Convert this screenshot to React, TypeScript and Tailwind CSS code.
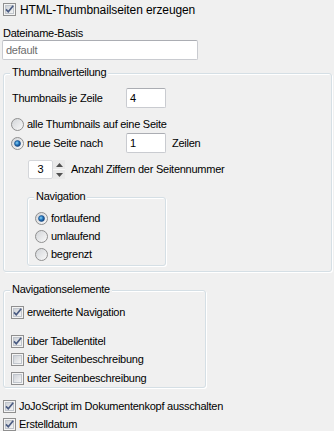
import type { ReactNode } from 'react'

const font = { fontFamily: '"Liberation Sans", Arial, sans-serif' }

function CheckBox({ checked = false }: { checked?: boolean }) {
  return (
    <svg width="13" height="13" viewBox="0 0 13 13" className="shrink-0">
      <defs>
        <linearGradient id="cbg" x1="0" y1="0" x2="1" y2="1">
          <stop offset="0" stopColor="#cbcfd5" />
          <stop offset="1" stopColor="#f7f7f7" />
        </linearGradient>
      </defs>
      <rect x="0.5" y="0.5" width="12" height="12" fill="#f4f4f4" stroke="#8f8f8f" />
      <rect x="2.5" y="2.5" width="8" height="8" fill="url(#cbg)" stroke="#c0c5cc" />
      {checked && (
        <path d="M3 6.3 L5.3 8.8 L10.2 2.8" fill="none" stroke="#4a5b82" strokeWidth="1.7" />
      )}
    </svg>
  )
}

function Radio({ checked = false }: { checked?: boolean }) {
  return (
    <svg width="13" height="13" viewBox="0 0 13 13" className="shrink-0">
      <defs>
        <linearGradient id="rbg" x1="0" y1="0" x2="1" y2="1">
          <stop offset="0" stopColor="#d0d3d7" />
          <stop offset="1" stopColor="#fbfbfb" />
        </linearGradient>
        <radialGradient id="rdot" cx="0.4" cy="0.4" r="0.6">
          <stop offset="0" stopColor="#8fd3f5" />
          <stop offset="0.5" stopColor="#2a7fc4" />
          <stop offset="1" stopColor="#0f3f7d" />
        </radialGradient>
      </defs>
      <circle cx="6.5" cy="6.5" r="6" fill="url(#rbg)" stroke="#8f8f8f" />
      {checked && <circle cx="6.5" cy="6.5" r="3" fill="url(#rdot)" stroke="#1b4f8a" strokeWidth="0.6" />}
    </svg>
  )
}

function Group({ title, className, children }: { title: string; className: string; children: ReactNode }) {
  return (
    <div
      className={`relative rounded-[3px] border border-[#d5dfe5] shadow-[inset_1px_1px_0_#ffffff,1px_1px_0_#ffffff] ${className}`}
    >
      <span className="absolute -top-[8px] left-[6px] bg-[#f0f0f0] px-[2px] text-[11px] leading-[13px]">
        {title}
      </span>
      {children}
    </div>
  )
}

function TextBox({ value, className }: { value: string; className: string }) {
  return (
    <div
      className={`flex items-center rounded-[2px] border border-[#c9cbd0] border-t-[#abadb3] bg-white pl-[3px] text-[11px] ${className}`}
    >
      {value}
    </div>
  )
}

function CheckRow({ label, checked, className = '' }: { label: string; checked?: boolean; className?: string }) {
  return (
    <div className={`flex h-[13px] items-center gap-[3px] text-[11px] ${className}`}>
      <CheckBox checked={checked} />
      <span>{label}</span>
    </div>
  )
}

function RadioRow({ label, checked, className = '' }: { label: string; checked?: boolean; className?: string }) {
  return (
    <div className={`flex h-[13px] items-center gap-[3px] text-[11px] ${className}`}>
      <Radio checked={checked} />
      <span>{label}</span>
    </div>
  )
}

export default function App() {
  return (
    <div
      style={font}
      className="flex h-[431px] w-[334px] flex-col bg-[#f0f0f0] pt-[3px] tracking-[-0.25px] text-black"
    >
      <div className="flex h-[13px] items-center gap-[4px] pl-[3px] text-[12px] tracking-[-0.1px]">
        <CheckBox checked />
        <span>HTML-Thumbnailseiten erzeugen</span>
      </div>

      <div className="mt-[11px] h-[13px] pl-[3px] text-[11px] leading-[13px]">Dateiname-Basis</div>
      <TextBox value="default" className="ml-[2px] h-[20px] w-[196px] text-[#6d6d6d]" />

      <Group title="Thumbnailverteilung" className="ml-[3px] mt-[13px] h-[199px] w-[329px]">
        <div className="mt-[14px] flex h-[20px] items-center text-[11px]">
          <span className="w-[122px] pl-[8px]">Thumbnails je Zeile</span>
          <TextBox value="4" className="h-[20px] w-[40px]" />
        </div>

        <RadioRow label="alle Thumbnails auf eine Seite" className="ml-[7px] mt-[10px]" />

        <div className="mt-[2px] flex h-[20px] items-center text-[11px]">
          <div className="flex w-[122px] items-center gap-[3px] pl-[7px]">
            <Radio checked />
            <span>neue Seite nach</span>
          </div>
          <TextBox value="1" className="h-[20px] w-[40px]" />
          <span className="ml-[6px]">Zeilen</span>
        </div>

        <div className="ml-[24px] mt-[7px] flex h-[19px] items-center text-[11px]">
          <div className="flex h-[19px] w-[25px] items-center justify-center rounded-[2px] border border-[#d4d6da] bg-white">
            3
          </div>
          <div className="flex h-[19px] w-[12px] flex-col">
            <div className="flex flex-1 items-center justify-center border-b border-[#f7f7f7] bg-[#e9e9e9]">
              <svg width="7" height="4" viewBox="0 0 7 4">
                <path d="M0 4 L3.5 0 L7 4 Z" fill="#505050" />
              </svg>
            </div>
            <div className="flex flex-1 items-center justify-center bg-[#e9e9e9]">
              <svg width="7" height="4" viewBox="0 0 7 4">
                <path d="M0 0 L3.5 4 L7 0 Z" fill="#505050" />
              </svg>
            </div>
          </div>
          <span className="ml-[6px]">Anzahl Ziffern der Seitennummer</span>
        </div>

        <Group title="Navigation" className="ml-[23px] mt-[18px] h-[69px] w-[139px]">
          <div className="mt-[14px] flex flex-col gap-[5px] pl-[7px]">
            <RadioRow label="fortlaufend" checked />
            <RadioRow label="umlaufend" />
            <RadioRow label="begrenzt" />
          </div>
        </Group>
      </Group>

      <Group title="Navigationselemente" className="ml-[3px] mt-[18px] h-[98px] w-[203px]">
        <div className="flex flex-col pl-[7px]">
          <CheckRow label="erweiterte Navigation" checked className="mt-[15px]" />
          <CheckRow label="über Tabellentitel" checked className="mt-[16px]" />
          <CheckRow label="über Seitenbeschreibung" className="mt-[5px]" />
          <CheckRow label="unter Seitenbeschreibung" className="mt-[6px]" />
        </div>
      </Group>

      <CheckRow label="JoJoScript im Dokumentenkopf ausschalten" checked className="ml-[3px] mt-[12px]" />
      <CheckRow label="Erstelldatum" checked className="ml-[3px] mt-[5px]" />
    </div>
  )
}
